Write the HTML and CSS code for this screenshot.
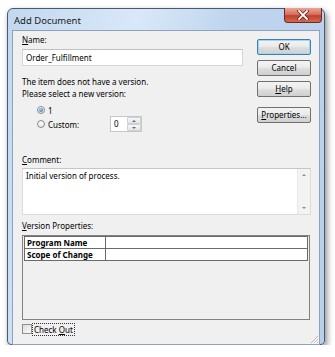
FILE: index.html
```html
<!DOCTYPE html>
<html lang="en">
<head>
    <meta charset="UTF-8">
    <meta name="viewport" content="width=device-width, initial-scale=1.0">
    <title>Add Document</title>
    <link rel="stylesheet" href="styles.css">
</head>
<body>
    <div class="window">
        <div class="titlebar">
            <span class="title">Add Document</span>
            <div class="close">
                <svg width="12" height="10" viewBox="0 0 12 10">
                    <path d="M2 1 L10 9 M10 1 L2 9" stroke="#5a1d15" stroke-width="3.2" stroke-linecap="square"/>
                    <path d="M2 1 L10 9 M10 1 L2 9" stroke="#ffffff" stroke-width="1.8" stroke-linecap="square"/>
                </svg>
            </div>
        </div>
        <div class="client">
            <div class="top">
                <div class="left">
                    <div class="label"><u>N</u>ame:</div>
                    <div class="textbox">Order_Fulfillment</div>
                    <div class="note first">The item does not have a version.</div>
                    <div class="note">Please select a new version:</div>
                    <div class="options">
                        <div class="option one"><span class="radio checked"></span>1</div>
                        <div class="option two">
                            <span class="radio"></span>
                            <span class="custom">Custom:</span>
                            <div class="spin">
                                <span class="spin-value">0</span>
                                <div class="spin-btns">
                                    <div class="spin-btn"><span class="arrow-up"></span></div>
                                    <div class="spin-btn"><span class="arrow-down"></span></div>
                                </div>
                            </div>
                        </div>
                    </div>
                </div>
                <div class="buttons">
                    <div class="btn default">OK</div>
                    <div class="btn">Cancel</div>
                    <div class="btn"><u>H</u>elp</div>
                    <div class="btn props"><u>P</u>roperties...</div>
                </div>
            </div>
            <div class="label comment-label"><u>C</u>omment:</div>
            <div class="memo">
                <div class="memo-text">Initial version of process.</div>
                <div class="vscroll">
                    <span class="sb-up"></span>
                    <span class="sb-down"></span>
                </div>
            </div>
            <div class="label props-label"><u>V</u>ersion Properties:</div>
            <div class="grid">
                <table>
                    <tr><th>Program Name</th><td></td></tr>
                    <tr><th>Scope of Change</th><td></td></tr>
                </table>
            </div>
            <div class="checkrow">
                <span class="checkbox"></span>
                <span class="check-label">Check <u>O</u>ut</span>
            </div>
            <svg class="grip" width="9" height="9" viewBox="0 0 9 9">
                <path d="M8 1 L1 8 M8 4 L4 8 M8 7 L7 8" stroke="#b8b8b8" stroke-width="1"/>
                <path d="M9 2 L2 9 M9 5 L5 9" stroke="#ffffff" stroke-width="1"/>
            </svg>
        </div>
    </div>
</body>
</html>
```

FILE: styles.css
```css
body {
    margin: 0;
    background: #ffffff;
    font-family: "Noto Sans", "Open Sans", sans-serif;
    font-size: 8px;
    color: #000;
}
.window {
    position: relative;
    margin: 8px 0 0 7px;
    width: 318px;
    height: 337px;
    box-sizing: border-box;
    border: 1px solid #4a5a6e;
    border-radius: 6px 6px 4px 4px;
    background: linear-gradient(100deg, #c2d8f0 0%, #d9e8f8 35%, #bfd5ee 60%, #b9d0ec 100%);
    padding: 0 4px 3px 4px;
    box-shadow: 2px 3px 6px rgba(0, 0, 0, 0.45);
}
.titlebar {
    height: 21px;
    display: flex;
    align-items: center;
}
.title {
    font-family: "Noto Sans", sans-serif;
    font-size: 9.5px;
    color: #1a1a1a;
    padding-left: 2px;
    margin-top: 1px;
}
.close {
    position: absolute;
    top: -1px;
    right: 2px;
    width: 38px;
    height: 15px;
    box-sizing: border-box;
    border: 1px solid #6e2a20;
    border-top: none;
    border-radius: 0 0 4px 4px;
    background: linear-gradient(#e9a596 0%, #d7705f 45%, #c0402d 55%, #d26a4f 100%);
    display: flex;
    justify-content: center;
    align-items: center;
}
.client {
    position: relative;
    height: 310px;
    border: 1px solid #8ca2bd;
    background: #f0f0f0;
    padding: 3px 8px 0 9px;
}
.top {
    display: flex;
    justify-content: space-between;
}
.left {
    width: 221px;
}
.label {
    height: 12px;
    line-height: 12px;
    white-space: nowrap;
}
.textbox {
    margin-top: 3px;
    height: 17px;
    box-sizing: border-box;
    border: 1px solid #d5d5d5;
    border-top-color: #c0c0c0;
    background: #fff;
    padding-left: 3px;
    line-height: 15px;
}
.note {
    height: 12px;
    line-height: 12px;
    white-space: nowrap;
}
.note.first {
    margin-top: 10px;
}
.options {
    padding-left: 15px;
    margin-top: 4px;
}
.option {
    display: flex;
    align-items: center;
}
.option.one {
    height: 12px;
}
.option.two {
    height: 16px;
}
.radio {
    width: 8px;
    height: 8px;
    box-sizing: border-box;
    border: 1px solid #8c8c8c;
    border-radius: 50%;
    background: radial-gradient(circle at 50% 35%, #ffffff, #dcdcdc);
    margin-right: 3px;
    display: inline-flex;
    justify-content: center;
    align-items: center;
}
.radio.checked::after {
    content: "";
    width: 4px;
    height: 4px;
    border-radius: 50%;
    background: radial-gradient(circle at 40% 35%, #9cd3f7, #1f5ea8);
}
.custom {
    width: 62px;
}
.spin {
    width: 32px;
    height: 16px;
    box-sizing: border-box;
    border: 1px solid #c6c6c6;
    background: #fff;
    display: flex;
    justify-content: space-between;
}
.spin-value {
    padding-left: 3px;
    line-height: 14px;
}
.spin-btns {
    width: 14px;
    display: flex;
    flex-direction: column;
    background: #f2f2f2;
}
.spin-btn {
    flex: 1;
    border: 1px solid #d0d0d0;
    border-radius: 1px;
    display: flex;
    justify-content: center;
    align-items: center;
    background: linear-gradient(#f8f8f8, #e4e4e4);
}
.arrow-up {
    border-left: 2px solid transparent;
    border-right: 2px solid transparent;
    border-bottom: 2px solid #4a6fa5;
}
.arrow-down {
    border-left: 2px solid transparent;
    border-right: 2px solid transparent;
    border-top: 2px solid #4a6fa5;
}
.buttons {
    width: 54px;
    padding-top: 5px;
    display: flex;
    flex-direction: column;
    gap: 5px;
}
.btn {
    height: 16px;
    box-sizing: border-box;
    border: 1px solid #707070;
    border-radius: 2px;
    background: linear-gradient(#f3f3f3 0%, #ebebeb 45%, #dddddd 55%, #cfcfcf 100%);
    text-align: center;
    line-height: 14px;
    white-space: nowrap;
}
.btn.default {
    border-color: #3c7fb1;
    box-shadow: inset 0 0 0 1px #9fd6f5;
}
.btn.props {
    margin-top: 5px;
}
.comment-label {
    margin-top: 22px;
}
.memo {
    margin-top: 2px;
    height: 47px;
    box-sizing: border-box;
    border: 1px solid #dcdcdc;
    border-top-color: #c6c6c6;
    background: #fff;
    display: flex;
    justify-content: space-between;
}
.memo-text {
    padding: 1px 3px;
    line-height: 12px;
}
.vscroll {
    width: 12px;
    background: #f3f3f3;
    border-left: 1px solid #e8e8e8;
    display: flex;
    flex-direction: column;
    justify-content: space-between;
    align-items: center;
    padding: 5px 0 5px;
}
.sb-up {
    border-left: 2px solid transparent;
    border-right: 2px solid transparent;
    border-bottom: 2px solid #8a8a8a;
}
.sb-down {
    border-left: 2px solid transparent;
    border-right: 2px solid transparent;
    border-top: 2px solid #8a8a8a;
}
.props-label {
    margin-top: 5px;
}
.grid {
    margin-top: 3px;
    width: 288px;
    height: 85px;
    box-sizing: border-box;
    border: 1px solid #828282;
    padding: 0 1px 0 1px;
}
table {
    width: 100%;
    border-collapse: collapse;
}
th, td {
    border: 1px solid #6a6a6a;
    height: 11px;
    padding: 0 2px;
    line-height: 11px;
    background: #fff;
}
th {
    width: 76px;
    text-align: left;
    font-weight: bold;
    white-space: nowrap;
}
.checkrow {
    margin-top: 3px;
    height: 12px;
    display: flex;
    align-items: center;
}
.checkbox {
    width: 10px;
    height: 10px;
    box-sizing: border-box;
    border: 1px solid #8f8f8f;
    background: linear-gradient(135deg, #dcdcdc, #fafafa);
}
.check-label {
    margin-left: 1px;
    padding: 0 1px;
    outline: 1px dotted #333;
    line-height: 11px;
}
.grip {
    position: absolute;
    right: 0;
    bottom: 0;
}
```
